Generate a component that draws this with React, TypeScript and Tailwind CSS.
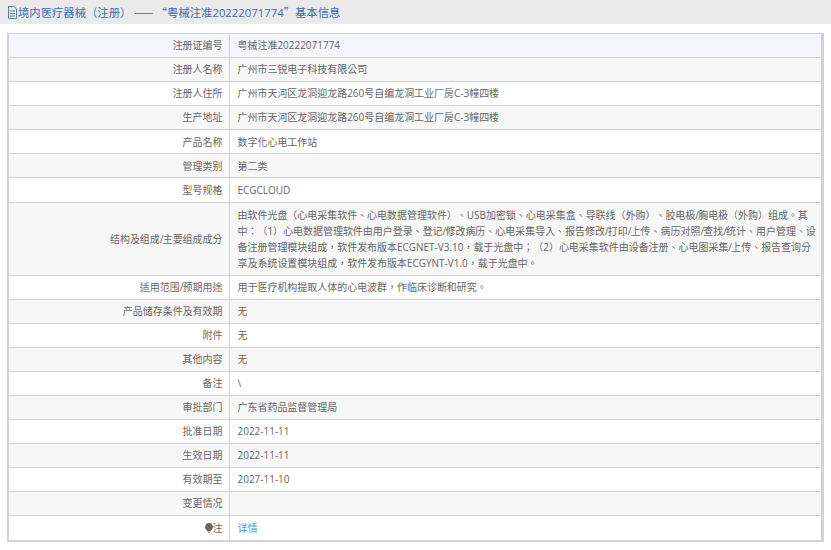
import React from "react";
const slash = (s: string) =>
  s.split("/").flatMap((p, i) =>
    i === 0 ? [p] : [<span key={i} className="tracking-[-0.8px]">/</span>, p]
  );
const rows: [string, string[]][] = [
  ["注册证编号", ["粤械注准20222071774"]],
  ["注册人名称", ["广州市三锐电子科技有限公司"]],
  ["注册人住所", ["广州市天河区龙洞迎龙路260号自编龙洞工业厂房C-3幢四楼"]],
  ["生产地址", ["广州市天河区龙洞迎龙路260号自编龙洞工业厂房C-3幢四楼"]],
  ["产品名称", ["数字化心电工作站"]],
  ["管理类别", ["第二类"]],
  ["型号规格", ["ECGCLOUD"]],
  ["结构及组成/主要组成成分", [
    "由软件光盘（心电采集软件、心电数据管理软件）、USB加密锁、心电采集盒、导联线（外购）、胶电极/胸电极（外购）组成。其",
    "中：（1）心电数据管理软件由用户登录、登记/修改病历、心电采集导入、报告修改/打印/上传、病历对照/查找/统计、用户管理、设",
    "备注册管理模块组成，软件发布版本ECGNET-V3.10，载于光盘中；（2）心电采集软件由设备注册、心电图采集/上传、报告查询分",
    "享及系统设置模块组成，软件发布版本ECGYNT-V1.0，载于光盘中。",
  ]],
  ["适用范围/预期用途", ["用于医疗机构提取人体的心电波群，作临床诊断和研究。"]],
  ["产品储存条件及有效期", ["无"]],
  ["附件", ["无"]],
  ["其他内容", ["无"]],
  ["备注", ["\\"]],
  ["审批部门", ["广东省药品监督管理局"]],
  ["批准日期", ["2022-11-11"]],
  ["生效日期", ["2022-11-11"]],
  ["有效期至", ["2027-11-10"]],
  ["变更情况", []],
];
const bg = (i: number) => (i === 0 ? "bg-[#f5f6fb]" : i % 2 === 1 ? "bg-[#f7f7f7]" : "bg-white");
export default function App() {
  return (
    <div className="w-[831px] h-[550px] overflow-hidden bg-white text-[9.97px] leading-[16px] text-[#666] [text-spacing-trim:space-all] font-['Open_Sans','Noto_Sans_CJK_TC',sans-serif]">
      <div className="h-[24px] bg-[#eaeaea] pl-[7px] flex items-center text-[#3f6cb0] text-[11.33px] whitespace-pre">
        <svg width="11" height="13" viewBox="0 0 11 13" fill="none" stroke="#5b7fb5" strokeWidth="1" className="shrink-0">
          <path d="M1.5.5h5.500l2.500 2.500v9.500h-8zM3 5h5M3 7.500h5M3 10h5" />
        </svg>
        <span>
          境内医疗器械（注册） <span className="font-['Noto_Sans_CJK_SC',sans-serif]">—— “</span>粤械注准20222071774<span className="font-['Noto_Sans_CJK_SC',sans-serif]">”</span>基本信息
        </span>
      </div>
      <div className="pt-[9px] pl-[7px]">
        <table className="w-[817px] border-collapse border-t border-l-2 border-r-[3px] border-b-2 border-[#d2d2d2] table-fixed">
          <colgroup><col className="w-[221px]" /><col /></colgroup>
          <tbody>
            {rows.map(([k, v], i) => (
              <tr key={k} className={bg(i)}>
                <td className={`border border-[#d2d2d2] pr-[6px] text-right ${i === 7 ? "py-[4px]" : "pt-[3.2px] pb-[3.9px]"}`}>{slash(k)}</td>
                <td className={`border border-[#d2d2d2] pl-[8px] pr-[2px] whitespace-nowrap ${i === 7 ? "py-[4px]" : "pt-[3.2px] pb-[3.9px]"}`}>
                  {v.map((line) => (
                    <div key={line}>{slash(line)}</div>
                  ))}
                </td>
              </tr>
            ))}
            <tr className="bg-white">
              <td className="border border-[#d2d2d2] pt-[3.2px] pb-[3.9px] pr-[6px] text-right">
                <span className="inline-flex items-center justify-end">
                  <svg width="8" height="10" viewBox="0 0 8 10" fill="#666"><path d="M4 0a4 4 0 0 1 2 7.400L5.500 8.500h-3L2 7.400A4 4 0 0 1 4 0zM2.800 9h2.400L4 10z" /></svg>
                  注
                </span>
              </td>
              <td className="border border-[#d2d2d2] pt-[3.2px] pb-[3.9px] pl-[8px] pr-[2px] text-[#4d90fe]">详情</td>
            </tr>
          </tbody>
        </table>
      </div>
    </div>
  );
}
